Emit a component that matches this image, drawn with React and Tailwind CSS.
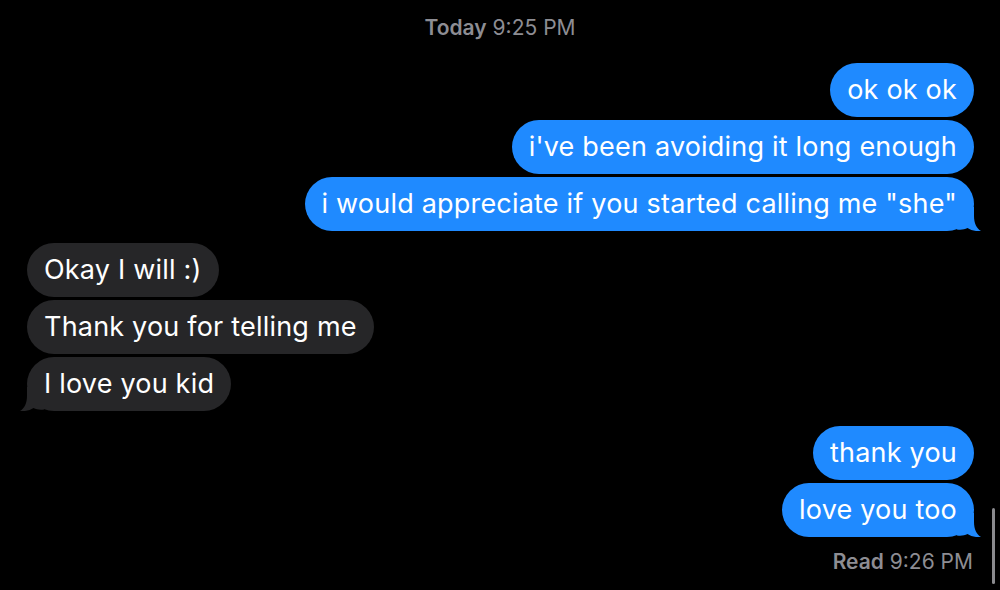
import React from 'react'

const FONT = { fontFamily: 'Inter, "Noto Sans", "Liberation Sans", sans-serif' }

function Tail({ side, color }) {
  return (
    <svg
      width="24"
      height="24"
      viewBox="0 0 24 24"
      className={
        side === 'right'
          ? 'absolute bottom-0 right-[-7px]'
          : 'absolute bottom-0 left-[-7px] scale-x-[-1]'
      }
    >
      <path
        d="M0 0 H17 V9 C17 16 19.5 21.5 24 24 C18.5 24.6 14 23.2 10.5 21 C7.5 22.6 4 23 0 22.5 Z"
        fill={color}
      />
    </svg>
  )
}

function Bubble({ text, mine, tail }) {
  const color = mine ? '#1f8aff' : '#262628'
  return (
    <div className={`flex ${mine ? 'justify-end' : 'justify-start'}`}>
      <div
        className="relative h-[54px] px-[17px] rounded-[27px] flex items-center text-white text-[27px] tracking-[0.2px] whitespace-nowrap"
        style={{ backgroundColor: color }}
      >
        <span className="relative z-10">{text}</span>
        {tail && <Tail side={mine ? 'right' : 'left'} color={color} />}
      </div>
    </div>
  )
}

const GROUP_ONE = ['ok ok ok', "i've been avoiding it long enough", 'i would appreciate if you started calling me "she"']
const GROUP_TWO = ['Okay I will :)', 'Thank you for telling me', 'I love you kid']
const GROUP_THREE = ['thank you', 'love you too']

export default function App() {
  return (
    <div className="relative w-[1000px] h-[590px] bg-black overflow-hidden" style={FONT}>
      {/* Timestamp */}
      <div className="pt-[15px] h-[63px] text-center text-[21px] text-[#8d8d93] leading-[26px]">
        <span className="font-semibold">Today</span> 9:25 PM
      </div>

      {/* Outgoing */}
      <div className="flex flex-col gap-[3px] pr-[26px]">
        {GROUP_ONE.map((t, i) => (
          <Bubble key={t} text={t} mine tail={i === GROUP_ONE.length - 1} />
        ))}
      </div>

      {/* Incoming */}
      <div className="flex flex-col gap-[3px] pl-[27px] mt-[12px]">
        {GROUP_TWO.map((t, i) => (
          <Bubble key={t} text={t} tail={i === GROUP_TWO.length - 1} />
        ))}
      </div>

      {/* Outgoing */}
      <div className="flex flex-col gap-[3px] pr-[26px] mt-[15px]">
        {GROUP_THREE.map((t, i) => (
          <Bubble key={t} text={t} mine tail={i === GROUP_THREE.length - 1} />
        ))}
      </div>

      <div className="pr-[27px] mt-[12px] text-right text-[21px] leading-[26px] text-[#8d8d93]">
        <span className="font-semibold">Read</span> 9:26 PM
      </div>

      {/* scroll indicator */}
      <div className="absolute right-[5px] top-[508px] w-[3px] h-[76px] rounded-full bg-[#8a8a8e]" />
    </div>
  )
}
